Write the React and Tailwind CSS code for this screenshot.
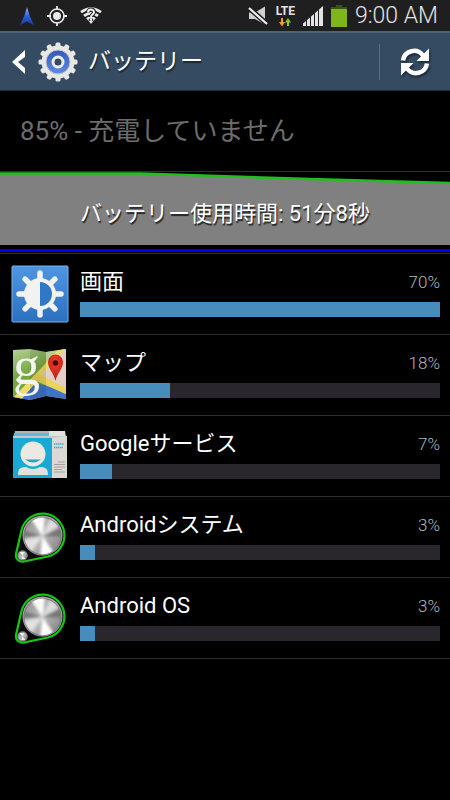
import React from "react";

const TEETH = [0, 30, 60, 90, 120, 150, 180, 210, 240, 270, 300, 330];
const RAYS = [0, 45, 90, 135, 180, 225, 270, 315];

const NavigationIcon = () => (
  <svg viewBox="0 0 14 18" className="w-[14px] h-[18px]" aria-hidden="true">
    <defs>
      <linearGradient id="nav" x1="0" y1="0" x2="0" y2="1">
        <stop offset="0" stopColor="#9db8ff" />
        <stop offset="0.5" stopColor="#2f5fd8" />
        <stop offset="1" stopColor="#173a9c" />
      </linearGradient>
    </defs>
    <path d="M7 0Q9 9 14 18L7 14.500 0 18Q5 9 7 0Z" fill="url(#nav)" />
  </svg>
);

const LocationIcon = () => (
  <svg viewBox="0 0 22 22" className="w-[22px] h-[22px]" aria-hidden="true">
    <circle cx="11" cy="11" r="7" fill="none" stroke="#e8e8e8" strokeWidth="1.6" />
    <circle cx="11" cy="11" r="4" fill="#e8e8e8" />
    <path d="M11 1v4M11 17v4M1 11h4M17 11h4" stroke="#e8e8e8" strokeWidth="1.8" />
  </svg>
);

const WifiIcon = () => (
  <svg viewBox="0 0 22 18" className="w-[22px] h-[18px]" aria-hidden="true">
    <g fill="none" stroke="#e8e8e8" strokeWidth="2.8">
      <path d="M1 5.2Q11-2 21 5.2" />
      <path d="M4 8.9Q11 3.6 18 8.9" />
      <path d="M7 12.2Q11 9 15 12.2" />
    </g>
    <path d="M8 13h6L11 17Z" fill="#e8e8e8" />
    <path
      d="M8 5.4C8 1.6 14 1.6 14 5.2 14 7.6 11 7.5 11 10M11 11.7v2"
      fill="none"
      stroke="#1f1f1f"
      strokeWidth="4"
    />
    <path
      d="M8 5.4C8 1.6 14 1.6 14 5.2 14 7.6 11 7.5 11 10M11 11.7v2"
      fill="none"
      stroke="#f2f2f2"
      strokeWidth="2"
    />
  </svg>
);

const MuteIcon = () => (
  <svg viewBox="0 0 20 20" className="w-5 h-5" aria-hidden="true">
    <path d="M1 6.500h6L17 0.500v18L7 13H1Z" fill="#d0d0d0" />
    <path d="M1 2 19 18" stroke="#1f1f1f" strokeWidth="5" />
    <path d="M1 2 19 18" stroke="#efefef" strokeWidth="2.2" />
  </svg>
);

const DataArrowsIcon = () => (
  <svg viewBox="0 0 12 9" className="w-3 h-[9px]" aria-hidden="true">
    <path d="M2 0h2v4h2L3 8.500 0 4h2Z" fill="#f59b2d" />
    <path d="M8 8V4.500H6L9 0l3 4.500h-2V8Z" fill="#7fd01c" />
  </svg>
);

const SignalIcon = () => (
  <svg viewBox="0 0 20 20" className="w-5 h-5" aria-hidden="true">
    <path
      d="M0 17.500l3-2.500v5H0ZM4 14l3-2.500V20H4ZM8 10.500l3-2.500V20H8ZM12 7l3-2.500V20h-3ZM16 3.500l4-3.500v20h-4Z"
      fill="#e4e4e4"
    />
  </svg>
);

const BatteryIcon = () => (
  <svg viewBox="0 0 16 22" className="w-4 h-[22px]" aria-hidden="true">
    <path d="M5 0h6v2h5v3H0V2h5Z" fill="#3c5217" />
    <path d="M0 4h16v18H0Z" fill="#7db51a" />
  </svg>
);

const SettingsIcon = () => (
  <svg viewBox="0 0 40 40" className="w-10 h-10" aria-hidden="true">
    <defs>
      <linearGradient id="gearBlue" x1="0" y1="0" x2="0" y2="1">
        <stop offset="0" stopColor="#3358b5" />
        <stop offset="1" stopColor="#5f8be6" />
      </linearGradient>
    </defs>
    <g fill="#e9e7e5">
      {TEETH.map((angle) => (
        <rect
          key={angle}
          x="17.500"
          y="0.500"
          width="5"
          height="7"
          rx="1.500"
          transform={`rotate(${angle} 20 20)`}
        />
      ))}
      <circle cx="20" cy="20" r="16.500" />
    </g>
    <circle cx="20" cy="20" r="12" fill="url(#gearBlue)" stroke="#c3c6cf" />
    <circle cx="20" cy="20" r="5" fill="#34495e" stroke="#eeeceb" strokeWidth="3" />
  </svg>
);

const RefreshIcon = () => (
  <svg
    viewBox="0 0 30 30"
    className="w-[30px] h-[30px] drop-shadow-[1px_2px_1px_#1b2936]"
    aria-hidden="true"
  >
    <g fill="none" stroke="#fff" strokeWidth="4.500">
      <path d="M3 13.500C4.500 3.500 17 0.500 23 8.500" />
      <path d="M27 16.500C25.500 26.500 13 29.500 7 21.500" />
    </g>
    <path d="M29 1.500v12.500H16.500ZM1 28.500V16h12.500Z" fill="#fff" />
  </svg>
);

const ScreenIcon = () => (
  <svg viewBox="0 0 60 60" className="w-full" aria-hidden="true">
    <defs>
      <linearGradient id="screenBg" x1="0" y1="0" x2="0" y2="1">
        <stop offset="0" stopColor="#4f96e2" />
        <stop offset="1" stopColor="#2a70bf" />
      </linearGradient>
    </defs>
    <rect x="2" y="2" width="56" height="56" rx="1" fill="url(#screenBg)" stroke="#79b2ee" />
    <g stroke="#f2f2f2" strokeWidth="5.500" strokeLinecap="round">
      {RAYS.map((angle) => (
        <path key={angle} d="M30 9v8" transform={`rotate(${angle} 30 30)`} />
      ))}
    </g>
    <circle cx="30" cy="30" r="16" fill="#f2f2f2" />
    <path d="M30 18a12 12 0 0 1 0 24Z" fill="#2f78c8" />
  </svg>
);

const MapIcon = () => (
  <svg viewBox="0 0 60 60" className="w-full overflow-visible" aria-hidden="true">
    <defs>
      <clipPath id="mapShape">
        <path d="M3 5 20 4l16 3 20-3v50l-20-3-16 4-17-3Z" />
      </clipPath>
      <linearGradient id="mapGreen" x1="0" y1="0" x2="0.4" y2="1">
        <stop offset="0" stopColor="#c2d8a6" />
        <stop offset="0.5" stopColor="#74a83f" />
      </linearGradient>
      <radialGradient id="pinRed" cx="0.5" cy="0.3" r="0.7">
        <stop offset="0" stopColor="#f0412d" />
        <stop offset="1" stopColor="#bd1a10" />
      </radialGradient>
    </defs>
    <g clipPath="url(#mapShape)">
      <path d="M0 0h60v60H0Z" fill="url(#mapGreen)" />
      <path d="M0 60 22 37 60 47v13Z" fill="#3f73c9" />
      <path d="M26 31 52 4h8v42Z" fill="#e3cfc6" />
      <path d="M36 4h16L36 20Z" fill="#b9cf92" />
      <path d="M2 54 49 4h6L10 56Z" fill="#efdc6e" />
      <path d="M27 28 60 45v6L22 34Z" fill="#ecd35c" />
      <path d="M20 0h16v60H20Z" fill="#000" opacity="0.1" />
    </g>
    <text
      x="3"
      y="39"
      fill="#f4f4f0"
      fontSize="54"
      fontFamily="'Liberation Serif', serif"
    >
      g
    </text>
    <path
      d="M45.500 36C44 28 38 24 38 17a7.500 7.500 0 0 1 15 0c0 7-6 11-7.500 19Z"
      fill="url(#pinRed)"
    />
    <circle cx="45.500" cy="18" r="2.800" fill="#4a0c08" />
  </svg>
);

const ServicesIcon = () => (
  <svg viewBox="0 0 60 60" className="w-full" aria-hidden="true">
    <path d="M5 5h34v6H4Z" fill="#b5b2ae" />
    <path d="M39 5h16l1 6H39Z" fill="#e3e1de" />
    <path d="M4 7h35v5H3Z" fill="#57bfdf" />
    <path d="M3 10h53l1 3H3Z" fill="#c9c7c4" />
    <path d="M3 12h39v40H3Z" fill="#1aa9d4" />
    <path d="M42 12l15-2v42H42Z" fill="#dcd9d5" />
    <path d="M44 18h10M44 21.500h9" stroke="#48aac8" strokeWidth="1.500" strokeDasharray="1.500 0.500" />
    <path
      d="M48 36h7M44 38.500h11M44 41h11M44 43.500h8M44 46h11"
      stroke="#a5a29f"
      strokeWidth="1.200"
    />
    <circle cx="23" cy="28" r="12.500" fill="#ece9e5" />
    <path d="M15 33.500h16q-8 6-16 0Z" fill="#2aa3c8" />
    <path d="M8 49c0-6 2-8 8-8q7 4 14 0c6 0 8 2 8 8Z" fill="#e3e0dc" />
  </svg>
);

const SystemIcon = () => (
  <svg viewBox="0 0 60 60" className="w-full" aria-hidden="true">
    <defs>
      <linearGradient id="metal" x1="0" y1="0" x2="1" y2="1">
        <stop offset="0" stopColor="#8c8c8c" />
        <stop offset="0.5" stopColor="#bdbdbd" />
        <stop offset="1" stopColor="#777" />
      </linearGradient>
      <filter id="soften">
        <feGaussianBlur stdDeviation="1.6" />
      </filter>
      <clipPath id="disc">
        <circle cx="32.500" cy="29" r="18.500" />
      </clipPath>
    </defs>
    <path
      d="M11.500 23A21.800 21.800 0 1 1 38 49.500L14 54.500A6.500 6.500 0 0 1 6 47Z"
      fill="#0b0b0b"
      stroke="#13c713"
      strokeWidth="2.200"
    />
    <circle cx="32.500" cy="28.500" r="20" fill="#aaa5ab" />
    <circle cx="32.500" cy="29" r="18.500" fill="url(#metal)" stroke="#6f6f6f" />
    <g clipPath="url(#disc)">
      <g filter="url(#soften)">
        <path d="M32.500 29 19 9h16ZM32.500 29 30 50l14-4Z" fill="#fff" />
        <path d="M32.500 29 13 33l8 12Z" fill="#e2e2e2" />
        <path d="M32.500 29 13 30v-7ZM32.500 29 52 20v10Z" fill="#777" />
        <path d="M32.500 29 40 12l9 7Z" fill="#dedede" />
      </g>
    </g>
    <circle cx="12.500" cy="48.500" r="4.800" fill="url(#metal)" stroke="#777" />
    <path d="m12.500 48.500-3-3.500h5ZM12.500 48.500l3 3.500h-4Z" fill="#eee" />
  </svg>
);

// level is the length of the bar, relative to the biggest consumer
const apps = [
  { name: "画面", percent: 70, level: 100, icon: ScreenIcon },
  { name: "マップ", percent: 18, level: 25, icon: MapIcon },
  { name: "Googleサービス", percent: 7, level: 9, icon: ServicesIcon },
  { name: "Androidシステム", percent: 3, level: 4.2, icon: SystemIcon },
  { name: "Android OS", percent: 3, level: 4.2, icon: SystemIcon },
];

const StatusBar = () => (
  <div className="flex items-center justify-between h-[31px] bg-[#1f1f1f] pl-5 pr-3 text-[#e4e4e4]">
    <div className="flex items-center gap-3">
      <NavigationIcon />
      <LocationIcon />
      <WifiIcon />
    </div>
    <div className="flex items-center gap-2">
      <MuteIcon />
      <div className="flex flex-col items-center gap-px">
        <span className="text-[12px] leading-[12px] font-bold">LTE</span>
        <DataArrowsIcon />
      </div>
      <SignalIcon />
      <BatteryIcon />
      <span className="text-[23px] leading-[31px] font-light">9:00 AM</span>
    </div>
  </div>
);

const Header = () => (
  <header className="flex items-center justify-between h-[60px] bg-[#354b61] border-t-2 border-t-[#4b647b] border-b border-b-[#1d2c3b] pl-2 pr-5">
    <button type="button" className="flex items-center" aria-label="戻る">
      <svg viewBox="0 0 20 26" className="w-5 h-[26px]" aria-hidden="true">
        <path d="M17 1v7L10 13l7 6v6L4 13Z" fill="#fff" />
      </svg>
    </button>
    <div className="flex flex-1 items-center gap-[10px] pl-[10px]">
      <SettingsIcon />
      <h1 className="text-[23px] leading-8 [text-shadow:1px_2px_1px_#1b2936]">
        バッテリー
      </h1>
    </div>
    <button
      type="button"
      className="flex items-center h-9 pl-5 border-l border-[#5a7085]"
      aria-label="更新"
    >
      <RefreshIcon />
    </button>
  </header>
);

const UsageGraph = () => (
  <a href="#history" className="grid border-b border-[#2e2e2e]">
    <svg
      viewBox="0 0 450 81"
      preserveAspectRatio="none"
      className="col-start-1 row-start-1 w-full h-[81px]"
      aria-hidden="true"
    >
      <path d="M0 1H140L310 7 450 11V73H0Z" fill="#808080" />
      <path d="M0 1.500H140L310 7 450 11" fill="none" stroke="#1fbf1f" strokeWidth="2.500" />
      <path d="M0 77h450v3H0Z" fill="#0000f5" />
    </svg>
    <span className="col-start-1 row-start-1 pt-[26px] text-center text-[22px] leading-8 [text-shadow:1px_2px_1px_#222]">
      バッテリー使用時間: 51分8秒
    </span>
  </a>
);

const AppRow = ({ app }) => {
  const Icon = app.icon;

  return (
    <li className="border-b border-[#2e2e2e]">
      <a href="#details" className="flex gap-[10px] px-[10px]">
        <div className="w-[60px] shrink-0 pt-[10px]">
          <Icon />
        </div>
        <div className="flex-1 pt-[14px] pb-[17px]">
          <div className="flex items-center justify-between h-7 mb-[6px]">
            <span className="text-[22px] leading-7">{app.name}</span>
            <span className="text-[17px] leading-7 font-light text-[#a9b8be]">
              {app.percent}%
            </span>
          </div>
          <div className="h-[15px] bg-[#29262d]">
            <div
              className="h-full bg-[#478dbc]"
              style={{ width: `${app.level}%` }}
            />
          </div>
        </div>
      </a>
    </li>
  );
};

const App = () => {
  return (
    <div
      lang="ja"
      className="min-h-screen bg-black text-white font-['Roboto','Noto_Sans_CJK_JP',sans-serif]"
    >
      <StatusBar />
      <Header />
      <main>
        <p className="px-5 py-6 text-[26px] leading-8 text-[#6c6c6c] border-b border-[#2e2e2e]">
          85% - 充電していません
        </p>
        <UsageGraph />
        <ul>
          {apps.map((app) => (
            <AppRow key={app.name} app={app} />
          ))}
        </ul>
      </main>
    </div>
  );
};

export default App;
